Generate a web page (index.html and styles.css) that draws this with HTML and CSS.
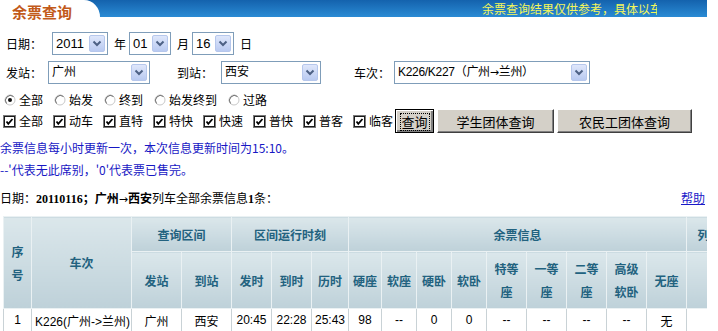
FILE: index.html
```html
<!DOCTYPE html>
<html lang="zh-CN">
<head>
    <meta charset="UTF-8">
    <title>余票查询</title>
    <link rel="stylesheet" href="styles.css">
</head>
<body>
<div class="page">
    <div class="topbar">
        <div class="tab">余票查询</div>
        <div class="marquee"><span>余票查询结果仅供参考，具体以车站实际发售为准</span></div>
    </div>

    <div class="row row-date">
        <span class="label">日期：</span>
        <div class="sel w-year"><span class="sel-text num">2011</span><span class="sel-btn"><svg width="14" height="15" viewBox="0 0 14 15"><path d="M3.5 5.5 L7 9 L10.5 5.5" stroke="#4d6185" stroke-width="2" fill="none"/></svg></span></div>
        <span class="unit">年</span>
        <div class="sel w-md"><span class="sel-text num">01</span><span class="sel-btn"><svg width="14" height="15" viewBox="0 0 14 15"><path d="M3.5 5.5 L7 9 L10.5 5.5" stroke="#4d6185" stroke-width="2" fill="none"/></svg></span></div>
        <span class="unit">月</span>
        <div class="sel w-md"><span class="sel-text num">16</span><span class="sel-btn"><svg width="14" height="15" viewBox="0 0 14 15"><path d="M3.5 5.5 L7 9 L10.5 5.5" stroke="#4d6185" stroke-width="2" fill="none"/></svg></span></div>
        <span class="unit">日</span>
    </div>

    <div class="row row-station">
        <span class="label">发站：</span>
        <div class="sel w-from"><span class="sel-text top">广州</span><span class="sel-btn"><svg width="14" height="15" viewBox="0 0 14 15"><path d="M3.5 5.5 L7 9 L10.5 5.5" stroke="#4d6185" stroke-width="2" fill="none"/></svg></span></div>
        <span class="label to">到站：</span>
        <div class="sel w-to"><span class="sel-text top">西安</span><span class="sel-btn"><svg width="14" height="15" viewBox="0 0 14 15"><path d="M3.5 5.5 L7 9 L10.5 5.5" stroke="#4d6185" stroke-width="2" fill="none"/></svg></span></div>
        <span class="label train">车次：</span>
        <div class="sel w-train"><span class="sel-text">K226/K227（广州<span class="arrow">→</span>兰州）</span><span class="sel-btn"><svg width="14" height="15" viewBox="0 0 14 15"><path d="M3.5 5.5 L7 9 L10.5 5.5" stroke="#4d6185" stroke-width="2" fill="none"/></svg></span></div>
    </div>

    <div class="row row-radio">
        <span class="opt"><svg class="ico" width="12" height="12" viewBox="0 0 12 12"><circle cx="6" cy="6" r="5" fill="#fff" stroke="#c8c8c8"/><path d="M2.5 9.5 A5 5 0 0 1 9.5 2.5" stroke="#6c6c6c" fill="none"/><circle cx="6" cy="6" r="2" fill="#111"/></svg>全部</span>
        <span class="opt"><svg class="ico" width="12" height="12" viewBox="0 0 12 12"><circle cx="6" cy="6" r="5" fill="#fff" stroke="#c8c8c8"/><path d="M2.5 9.5 A5 5 0 0 1 9.5 2.5" stroke="#6c6c6c" fill="none"/></svg>始发</span>
        <span class="opt"><svg class="ico" width="12" height="12" viewBox="0 0 12 12"><circle cx="6" cy="6" r="5" fill="#fff" stroke="#c8c8c8"/><path d="M2.5 9.5 A5 5 0 0 1 9.5 2.5" stroke="#6c6c6c" fill="none"/></svg>终到</span>
        <span class="opt"><svg class="ico" width="12" height="12" viewBox="0 0 12 12"><circle cx="6" cy="6" r="5" fill="#fff" stroke="#c8c8c8"/><path d="M2.5 9.5 A5 5 0 0 1 9.5 2.5" stroke="#6c6c6c" fill="none"/></svg>始发终到</span>
        <span class="opt"><svg class="ico" width="12" height="12" viewBox="0 0 12 12"><circle cx="6" cy="6" r="5" fill="#fff" stroke="#c8c8c8"/><path d="M2.5 9.5 A5 5 0 0 1 9.5 2.5" stroke="#6c6c6c" fill="none"/></svg>过路</span>
    </div>

    <div class="row row-check">
        <span class="opt"><svg class="ico" width="13" height="13" viewBox="0 0 13 13"><rect x="0.5" y="0.5" width="12" height="12" fill="#fff" stroke="#7a7a7a"/><rect x="1.5" y="1.5" width="10" height="10" fill="none" stroke="#1a1a1a"/><path d="M3.5 6.5 L5.3 8.8 L9.5 4" stroke="#000" stroke-width="1.8" fill="none"/></svg>全部</span>
        <span class="opt"><svg class="ico" width="13" height="13" viewBox="0 0 13 13"><rect x="0.5" y="0.5" width="12" height="12" fill="#fff" stroke="#7a7a7a"/><rect x="1.5" y="1.5" width="10" height="10" fill="none" stroke="#1a1a1a"/><path d="M3.5 6.5 L5.3 8.8 L9.5 4" stroke="#000" stroke-width="1.8" fill="none"/></svg>动车</span>
        <span class="opt"><svg class="ico" width="13" height="13" viewBox="0 0 13 13"><rect x="0.5" y="0.5" width="12" height="12" fill="#fff" stroke="#7a7a7a"/><rect x="1.5" y="1.5" width="10" height="10" fill="none" stroke="#1a1a1a"/><path d="M3.5 6.5 L5.3 8.8 L9.5 4" stroke="#000" stroke-width="1.8" fill="none"/></svg>直特</span>
        <span class="opt"><svg class="ico" width="13" height="13" viewBox="0 0 13 13"><rect x="0.5" y="0.5" width="12" height="12" fill="#fff" stroke="#7a7a7a"/><rect x="1.5" y="1.5" width="10" height="10" fill="none" stroke="#1a1a1a"/><path d="M3.5 6.5 L5.3 8.8 L9.5 4" stroke="#000" stroke-width="1.8" fill="none"/></svg>特快</span>
        <span class="opt"><svg class="ico" width="13" height="13" viewBox="0 0 13 13"><rect x="0.5" y="0.5" width="12" height="12" fill="#fff" stroke="#7a7a7a"/><rect x="1.5" y="1.5" width="10" height="10" fill="none" stroke="#1a1a1a"/><path d="M3.5 6.5 L5.3 8.8 L9.5 4" stroke="#000" stroke-width="1.8" fill="none"/></svg>快速</span>
        <span class="opt"><svg class="ico" width="13" height="13" viewBox="0 0 13 13"><rect x="0.5" y="0.5" width="12" height="12" fill="#fff" stroke="#7a7a7a"/><rect x="1.5" y="1.5" width="10" height="10" fill="none" stroke="#1a1a1a"/><path d="M3.5 6.5 L5.3 8.8 L9.5 4" stroke="#000" stroke-width="1.8" fill="none"/></svg>普快</span>
        <span class="opt"><svg class="ico" width="13" height="13" viewBox="0 0 13 13"><rect x="0.5" y="0.5" width="12" height="12" fill="#fff" stroke="#7a7a7a"/><rect x="1.5" y="1.5" width="10" height="10" fill="none" stroke="#1a1a1a"/><path d="M3.5 6.5 L5.3 8.8 L9.5 4" stroke="#000" stroke-width="1.8" fill="none"/></svg>普客</span>
        <span class="opt last"><svg class="ico" width="13" height="13" viewBox="0 0 13 13"><rect x="0.5" y="0.5" width="12" height="12" fill="#fff" stroke="#7a7a7a"/><rect x="1.5" y="1.5" width="10" height="10" fill="none" stroke="#1a1a1a"/><path d="M3.5 6.5 L5.3 8.8 L9.5 4" stroke="#000" stroke-width="1.8" fill="none"/></svg>临客</span>
        <button class="btn btn-default"><span class="focus">查询</span></button>
        <button class="btn btn-student">学生团体查询</button>
        <button class="btn btn-worker">农民工团体查询</button>
    </div>

    <p class="notice">余票信息每小时更新一次，本次信息更新时间为15:10。</p>
    <p class="notice">--'代表无此席别，'0'代表票已售完。</p>

    <div class="result-head">
        <span>日期：<b>20110116；广州<span class="arrow">→</span>西安</b>列车全部余票信息<b>1</b>条：</span>
        <a class="help" href="#">帮助</a>
    </div>

    <div class="grid-wrap">
        <table class="grid">
            <colgroup>
                <col style="width:28px"><col style="width:100px"><col style="width:50px"><col style="width:50px">
                <col style="width:40px"><col style="width:40px"><col style="width:37px"><col style="width:33px">
                <col style="width:35px"><col style="width:35px"><col style="width:35px"><col style="width:40px">
                <col style="width:40px"><col style="width:40px"><col style="width:40px"><col style="width:40px">
                <col style="width:70px">
            </colgroup>
            <tr class="h1">
                <th rowspan="2">序号</th>
                <th rowspan="2">车次</th>
                <th colspan="2">查询区间</th>
                <th colspan="3">区间运行时刻</th>
                <th colspan="9">余票信息</th>
                <th>列车类型</th>
            </tr>
            <tr class="h2">
                <th>发站</th><th>到站</th>
                <th>发时</th><th>到时</th><th>历时</th>
                <th>硬座</th><th>软座</th><th>硬卧</th><th>软卧</th>
                <th>特等座</th><th>一等座</th><th>二等座</th><th>高级软卧</th><th>无座</th>
                <th></th>
            </tr>
            <tr class="data">
                <td>1</td>
                <td class="left">K226(广州-&gt;兰州)</td>
                <td>广州</td><td>西安</td>
                <td>20:45</td><td>22:28</td><td>25:43</td>
                <td>98</td><td>--</td><td>0</td><td>0</td>
                <td>--</td><td>--</td><td>--</td><td>--</td><td>无</td>
                <td></td>
            </tr>
        </table>
    </div>
</div>
</body>
</html>
```

FILE: styles.css
```css
body {
    margin: 0;
    background-color: #fff;
    font-family: "Noto Sans CJK SC", sans-serif;
    font-size: 12px;
    color: #000;
}
.page {
    width: 707px;
    overflow: hidden;
}
.topbar {
    display: flex;
    height: 17px;
    background: linear-gradient(#1462ad, #2a8bd4);
}
.tab {
    width: 100px;
    flex: none;
    background-color: #fff;
    border-top-right-radius: 16px 17px;
    padding-left: 12px;
    box-sizing: border-box;
    color: #c25a1a;
    font-size: 15px;
    font-weight: bold;
    line-height: 24px;
    height: 24px;
}
.marquee {
    width: 557px;
    overflow: hidden;
    white-space: nowrap;
    padding-left: 382px;
    box-sizing: border-box;
    color: #f4f65a;
    line-height: 17px;
}
.arrow {
    font-family: "DejaVu Sans", sans-serif;
    font-weight: normal;
    font-size: 11px;
}
.row {
    display: flex;
    align-items: center;
}
.row-date {
    margin-top: 15px;
    height: 23px;
}
.row-station {
    margin-top: 6px;
    height: 23px;
}
.label {
    padding-left: 6px;
    width: 36px;
    margin-right: 10px;
}
.row-station .label {
    margin-right: 6px;
}
.row-station .label.to {
    margin-left: 21px;
    margin-right: 8px;
}
.row-station .label.train {
    margin-left: 33px;
    margin-right: 4px;
    padding-left: 0;
}
.unit {
    margin: 0 3px 0 6px;
}
.sel {
    display: flex;
    align-items: center;
    justify-content: space-between;
    height: 23px;
    box-sizing: border-box;
    border: 1px solid #7f9db9;
    padding: 0 2px 0 3px;
    background-color: #fff;
}
.sel-text {
    white-space: nowrap;
    line-height: 16px;
}
.sel-text.top {
    align-self: flex-start;
    margin-top: 1px;
}
.num {
    font-family: "Liberation Sans", sans-serif;
    font-size: 13px;
}
.sel-btn {
    width: 16px;
    height: 17px;
    box-sizing: border-box;
    border: 1px solid #b6c7ec;
    border-radius: 2px;
    background: linear-gradient(#dfe7fb, #b9caf1);
    display: flex;
    align-items: center;
    justify-content: center;
}
.w-year { width: 56px; }
.w-md { width: 42px; }
.w-from { width: 102px; }
.w-to { width: 100px; }
.w-train { width: 196px; }
.w-train .sel-text {
    font-family: "Liberation Sans", "Noto Sans CJK SC", sans-serif;
    letter-spacing: -0.3px;
}
.row-radio {
    margin-top: 8px;
    height: 16px;
    padding-left: 4px;
}
.row-check {
    margin-top: 1px;
    height: 24px;
    padding-left: 3px;
}
.opt {
    display: flex;
    align-items: center;
    margin-right: 10px;
    line-height: 16px;
}
.opt.last {
    margin-right: 2px;
}
.ico {
    margin-right: 3px;
}
.row-radio .opt {
    margin-right: 11px;
}
.btn {
    height: 24px;
    box-sizing: border-box;
    margin: 0 3px 0 0;
    padding: 0;
    font-family: "Noto Sans CJK SC", sans-serif;
    font-size: 13px;
    background-color: #d4d0c8;
    border: 1px solid;
    border-color: #fff #404040 #404040 #fff;
    box-shadow: inset -1px -1px #808080;
    color: #000;
}
.btn-default {
    width: 39px;
    border: 1px solid #000;
    box-shadow: inset 1px 1px #fff, inset -2px -2px #808080;
}
.focus {
    display: inline-block;
    border: 1px dotted #000;
    padding: 0 1px;
    line-height: 16px;
}
.btn-student { width: 117px; }
.btn-worker { width: 135px; }
.notice {
    margin: 0;
    color: #1717c4;
    line-height: 22px;
}
.notice:first-of-type {
    margin-top: 4px;
}
.result-head {
    display: flex;
    justify-content: space-between;
    margin-top: 7px;
    line-height: 20px;
}
.result-head b {
    font-family: "Liberation Serif", "Noto Sans CJK SC", serif;
}
.help {
    color: #1a1ac8;
    margin-right: 2px;
}
.grid-wrap {
    margin-top: 6px;
    padding-left: 3px;
    overflow: hidden;
}
.grid {
    width: 753px;
    table-layout: fixed;
    border-collapse: collapse;
    border-top: 1px solid #b4c6cf;
}
.grid th {
    background: linear-gradient(#dbe7eb, #bed1d9);
    border: 1px solid #eaf1f3;
    color: #22627f;
    font-weight: bold;
    padding: 0 4px;
    line-height: 23px;
}
.grid tr.h1 th {
    height: 34px;
    padding: 0 3px;
}
.grid tr.h2 th {
    height: 56px;
}
.grid th:last-child {
    white-space: nowrap;
    overflow: hidden;
    text-align: center;
}
.grid td {
    border: 1px solid #c9d2d6;
    height: 22px;
    text-align: center;
    font-family: "Liberation Sans", "Noto Sans CJK SC", sans-serif;
    padding: 0;
    white-space: nowrap;
    overflow: hidden;
}
.grid td.left {
    text-align: left;
    padding-left: 3px;
}
```
